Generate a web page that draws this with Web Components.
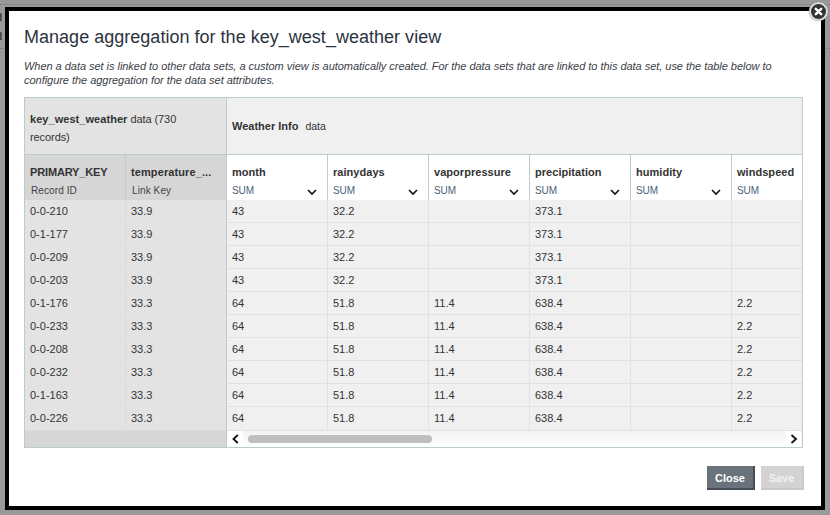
<!DOCTYPE html>
<html><head><meta charset="utf-8"><style>
html,body{margin:0;padding:0;height:100%;}
body{font-family:"Liberation Sans",Arial,sans-serif;color:#333;overflow:hidden;}
</style></head><body>
<template id="t-backdrop"><style>
:host{display:flex;width:830px;height:515px;box-sizing:border-box;padding:7px 5px 5px 5px;background:#999;position:relative;overflow:hidden;}
.dots{position:absolute;left:0;right:0;height:0;border-top:1px dotted #777;}
.d{position:absolute;left:-4px;font:11px "Liberation Sans",sans-serif;color:#222;}
</style>
<div class="dots" style="top:4px"></div><div class="dots" style="top:48px"></div>
<span class="d" style="top:11px">d</span><span class="d" style="top:30px">d</span>
<slot></slot></template>

<template id="t-modal"><style>
:host{display:flex;flex-direction:column;flex:1;min-width:0;box-sizing:border-box;background:#fff;border:4px solid #000;padding:13px 17px 16px 15px;position:relative;}
h1{margin:0;font:400 18px/26px "Liberation Sans",sans-serif;color:#2b3340;letter-spacing:.02px;}
p{margin:9px 0 10px;font:italic 11px/14px "Liberation Sans",sans-serif;color:#3a4048;letter-spacing:-.036px;}
.foot{display:flex;justify-content:flex-end;gap:6px;margin-top:18px;padding-right:0;}
.x{position:absolute;right:-7px;top:-9px;width:19px;height:19px;box-sizing:border-box;border-radius:50%;background:#333;border:2px solid #ddd;box-shadow:0 0 1px #666;display:flex;align-items:center;justify-content:center;}
</style>
<h1><slot name="title"></slot></h1><p><slot name="desc"></slot></p><slot></slot>
<div class="foot"><slot name="actions"></slot></div>
<div class="x"><svg width="9" height="9" viewBox="0 0 9 9"><path d="M1.800 1.800 7.200 7.200M7.200 1.800 1.800 7.200" stroke="#fff" stroke-width="2.500" stroke-linecap="round"/></svg></div>
</template>

<template id="t-btn"><style>
:host{display:block;width:48px;height:24px;box-sizing:border-box;font:bold 11px/24px "Liberation Sans",sans-serif;text-align:center;color:#fff;background:#6a737b;border-right:2px solid #454c53;border-bottom:2px solid #454c53;}
:host([disabled]){width:43px;background:#d3d3d3;border-color:#c9c9c9;color:#f1f1f1;}
</style><slot></slot></template>

<template id="t-table"><style>
:host{display:grid;grid-template-columns:202px 575px;grid-template-rows:57px 45px 230px 17px;width:779px;box-sizing:border-box;border:1px solid #bccbcb;font:11px "Liberation Sans",sans-serif;color:#333;background:#fff;}
b{font-weight:bold;}
.h1l{background:#e3e3e3;border-right:1px solid #bccbcb;border-bottom:1px solid #bccbcb;padding:12px 5px 0;line-height:18px;box-sizing:border-box;letter-spacing:-.08px;}
.h1l b{letter-spacing:.05px;}
.h1l div{white-space:nowrap;}
.h1r{background:#f0f0f0;border-bottom:1px solid #bccbcb;display:flex;align-items:center;padding:0 5px 1px;box-sizing:border-box;}
.h1r span{margin-left:7px;font-size:10.5px;}
.h2l{display:grid;grid-template-columns:101px 101px;background:#d6d6d6;border-right:1px solid #bccbcb;box-sizing:border-box;}
.h2l>div{padding-top:11px;padding-left:5px;box-sizing:border-box;border-right:1px solid #bccbcb;line-height:13px;}
.h2l>div:last-child{border:0;}
.h2l small{display:block;font-size:10px;margin:5px 0 0 1px;letter-spacing:.1px;color:#444;}
.h2l b{letter-spacing:.1px;}
.h2l b.k{letter-spacing:-.15px;}
.hc b{letter-spacing:.04px;white-space:nowrap;}
.clip{overflow:hidden;}
.row{display:grid;height:23px;box-sizing:border-box;border-bottom:1px solid #dee2e4;line-height:22px;}
.row:last-child{border-bottom:0;}
.L .row{grid-template-columns:101px 101px;background:#e3e3e3;border-right:1px solid #bccbcb;}
.L .row>div{padding-left:5px;border-right:1px solid #dadddf;}
.L .row>div:last-child{border:0;}
.R .row{grid-template-columns:repeat(6,101px);background:#f0f0f0;width:606px;}
.R .row>div{padding-left:5px;border-right:1px solid #dee2e4;}
.hh{display:grid;grid-template-columns:repeat(6,101px);width:606px;height:100%;}
.hc{position:relative;padding:11px 0 0 5px;box-sizing:border-box;border-right:1px solid #bccbcb;line-height:13px;background:#fff;}
.hc small{display:block;font-size:10px;margin-top:5px;letter-spacing:-.1px;color:#4a6178;}
.hc svg{position:absolute;right:10px;bottom:4px;}
.botl{background:#d6d6d6;border-right:1px solid #bccbcb;border-top:1px solid #d9dddf;box-sizing:border-box;}
.sb{display:grid;grid-template-columns:15px 1fr 15px;gap:1px;background:linear-gradient(#f3f3f3,#fff);border-top:1px solid #e0e4e6;box-sizing:border-box;padding:0 1px;}
.sb i{display:flex;align-items:center;justify-content:center;background:#fff;}
.track{position:relative;}
.thumb{position:absolute;left:4px;top:4px;width:184px;height:8px;border-radius:4px;background:#bfbfbf;}
</style>
<div class="h1l"><div><b>key_west_weather</b> <span>data (730</span></div><div>records)</div></div>
<div class="h1r"><b>Weather Info</b><span>data</span></div>
<div class="h2l" id="hl"></div>
<div class="clip"><div class="hh" id="hr"></div></div>
<div class="L" id="bl"></div>
<div class="R clip" id="br"></div>
<div class="botl"></div>
<div class="sb"><i><svg width="8" height="10" viewBox="0 0 8 10"><path d="M5.800 1 1.500 5l4.300 4" fill="none" stroke="#111" stroke-width="1.800"/></svg></i>
<div class="track"><div class="thumb"></div></div>
<i><svg width="8" height="10" viewBox="0 0 8 10"><path d="M1.500 1 6 5 1.500 9" fill="none" stroke="#111" stroke-width="1.800"/></svg></i></div>
</template>

<x-backdrop><x-modal>
<span slot="title">Manage aggregation for the key_west_weather view</span>
<span slot="desc">When a data set is linked to other data sets, a custom view is automatically created. For the data sets that are linked to this data set, use the table below to configure the aggregation for the data set attributes.</span>
<x-data-table></x-data-table>
<x-btn slot="actions">Close</x-btn>
<x-btn slot="actions" disabled>Save</x-btn>
</x-modal></x-backdrop>

<script>
function base(id){return class extends HTMLElement{constructor(){super();this.attachShadow({mode:'open'}).appendChild(document.getElementById(id).content.cloneNode(true));}}}
customElements.define('x-backdrop',base('t-backdrop'));
customElements.define('x-modal',base('t-modal'));
customElements.define('x-btn',base('t-btn'));
const chev='<svg width="10" height="7" viewBox="0 0 10 7"><path d="M1 1l4 4 4-4" fill="none" stroke="#111" stroke-width="1.600"/></svg>';
const ids=['0-0-210','0-1-177','0-0-209','0-0-203','0-1-176','0-0-233','0-0-208','0-0-232','0-1-163','0-0-226'];
customElements.define('x-data-table',class extends base('t-table'){
 connectedCallback(){const s=this.shadowRoot;
  s.getElementById('hl').innerHTML='<div><b class="k">PRIMARY_KEY</b><small>Record ID</small></div><div><b>temperature_...</b><small>Link Key</small></div>';
  s.getElementById('hr').innerHTML=['month','rainydays','vaporpressure','precipitation','humidity','windspeed'].map((c,i)=>`<div class="hc"><b>${c}</b><small>SUM</small>${i<5?chev:''}</div>`).join('');
  s.getElementById('bl').innerHTML=ids.map((d,i)=>`<div class="row"><div>${d}</div><div>${i<4?'33.9':'33.3'}</div></div>`).join('');
  s.getElementById('br').innerHTML=ids.map((d,i)=>{const v=i<4?['43','32.2','','373.1','','']:['64','51.8','11.4','638.4','','2.2'];return `<div class="row">${v.map(x=>`<div>${x}</div>`).join('')}</div>`}).join('');
 }});
</script>
</body></html>
